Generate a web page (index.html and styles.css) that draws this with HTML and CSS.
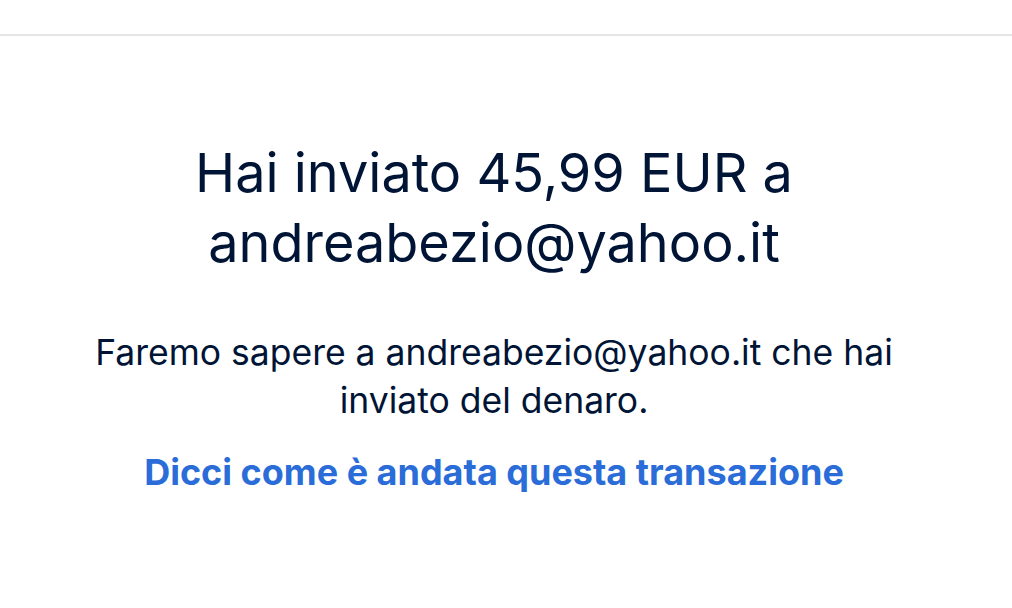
FILE: index.html
```html
<!DOCTYPE html>
<html lang="it">
<head>
<meta charset="utf-8">
<title>Pagamento inviato</title>
<link rel="stylesheet" href="styles.css">
</head>
<body>
<header class="topbar"></header>
<main class="content">
  <h1 class="title">Hai inviato 45,99 EUR a andreabezio@yahoo.it</h1>
  <p class="note">Faremo sapere a andreabezio@yahoo.it che hai inviato del denaro.</p>
  <a class="feedback" href="#">Dicci come è andata questa transazione</a>
</main>
</body>
</html>
```
FILE: styles.css
```css
html, body {
  margin: 0;
  padding: 0;
  background: #ffffff;
}
body {
  font-family: Inter, "Noto Sans", sans-serif;
  color: #001435;
}
.topbar {
  height: 34px;
  border-bottom: 2px solid #e5e5e5;
}
.content {
  width: 988px;
  display: flex;
  flex-direction: column;
  align-items: center;
  text-align: center;
  padding-top: 102px;
}
.title {
  margin: 0;
  max-width: 660px;
  font-size: 54px;
  font-weight: 400;
  line-height: 70px;
}
.note {
  margin: 51px 0 0;
  max-width: 830px;
  font-size: 35.5px;
  line-height: 48px;
}
.feedback {
  margin-top: 25px;
  font-size: 36px;
  line-height: 44px;
  font-weight: 700;
  color: #2a6cd8;
  text-decoration: none;
}
```
